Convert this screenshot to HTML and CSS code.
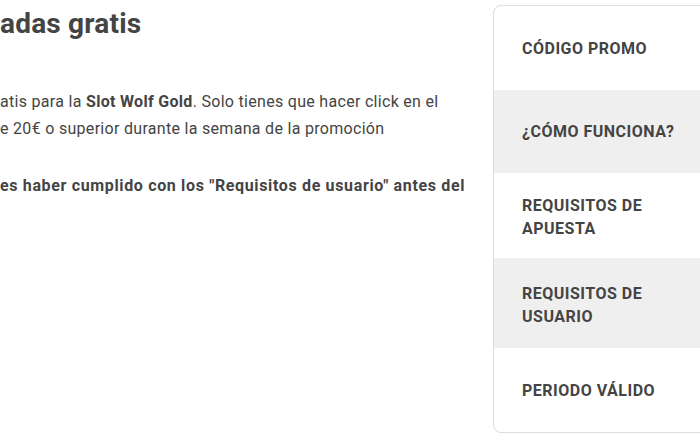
FILE: index.html
```html
<!DOCTYPE html>
<html lang="es">

<head>
    <meta charset="UTF-8">
    <meta name="viewport" content="width=device-width, initial-scale=1.0">
    <title>Tiradas gratis</title>
    <link rel="stylesheet" href="styles.css">
</head>

<body>
    <div class="page">
        <div class="content">
            <h1>adas gratis</h1>
            <p>atis para la <b>Slot Wolf Gold</b>. Solo tienes que hacer click en el<br>e 20€ o superior durante la semana de la promoción</p>
            <p class="note">es haber cumplido con los "Requisitos de usuario" antes del</p>
        </div>
        <aside class="sidebar">
            <ul class="menu">
                <li class="item">CÓDIGO PROMO</li>
                <li class="item grey">¿CÓMO FUNCIONA?</li>
                <li class="item two">REQUISITOS DE<br>APUESTA</li>
                <li class="item grey two tall">REQUISITOS DE<br>USUARIO</li>
                <li class="item">PERIODO VÁLIDO</li>
            </ul>
        </aside>
    </div>
</body>

</html>
```

FILE: styles.css
```css
html, body {
  margin: 0;
  overflow: hidden;
}
body {
  font-family: Roboto, 'Open Sans', Arial, sans-serif;
  background-color: #fff;
  color: #444;
}
.page {
  display: flex;
  align-items: flex-start;
  width: 760px;
}
.content {
  width: 493px;
  flex-shrink: 0;
  overflow: hidden;
  white-space: nowrap;
}
h1 {
  font-size: 28px;
  font-weight: 700;
  line-height: 34px;
  margin: 7px 0 0;
  color: #444;
  letter-spacing: 0.2px;
}
.content p {
  font-size: 16px;
  line-height: 27px;
  margin: 47px 0 0;
  letter-spacing: 0.3px;
}
.content p b {
  font-weight: 700;
}
.content p.note {
  font-weight: 700;
  margin-top: 30px;
  letter-spacing: 0.65px;
}
.sidebar {
  width: 240px;
  flex-shrink: 0;
  margin-top: 5px;
  border: 1px solid #ddd;
  border-radius: 8px;
  overflow: hidden;
}
.menu {
  list-style-type: none;
  margin: 0;
  padding: 0;
}
.item {
  display: flex;
  align-items: center;
  min-height: 84px;
  box-sizing: border-box;
  padding: 0 28px;
  font-size: 16px;
  font-weight: 700;
  line-height: 23px;
  letter-spacing: 0.5px;
  color: #444;
}
.item.grey {
  background-color: #efefef;
  min-height: 83px;
}
.item.two {
  min-height: 85px;
  padding-top: 3px;
}
.item.tall {
  min-height: 90px;
}
```
